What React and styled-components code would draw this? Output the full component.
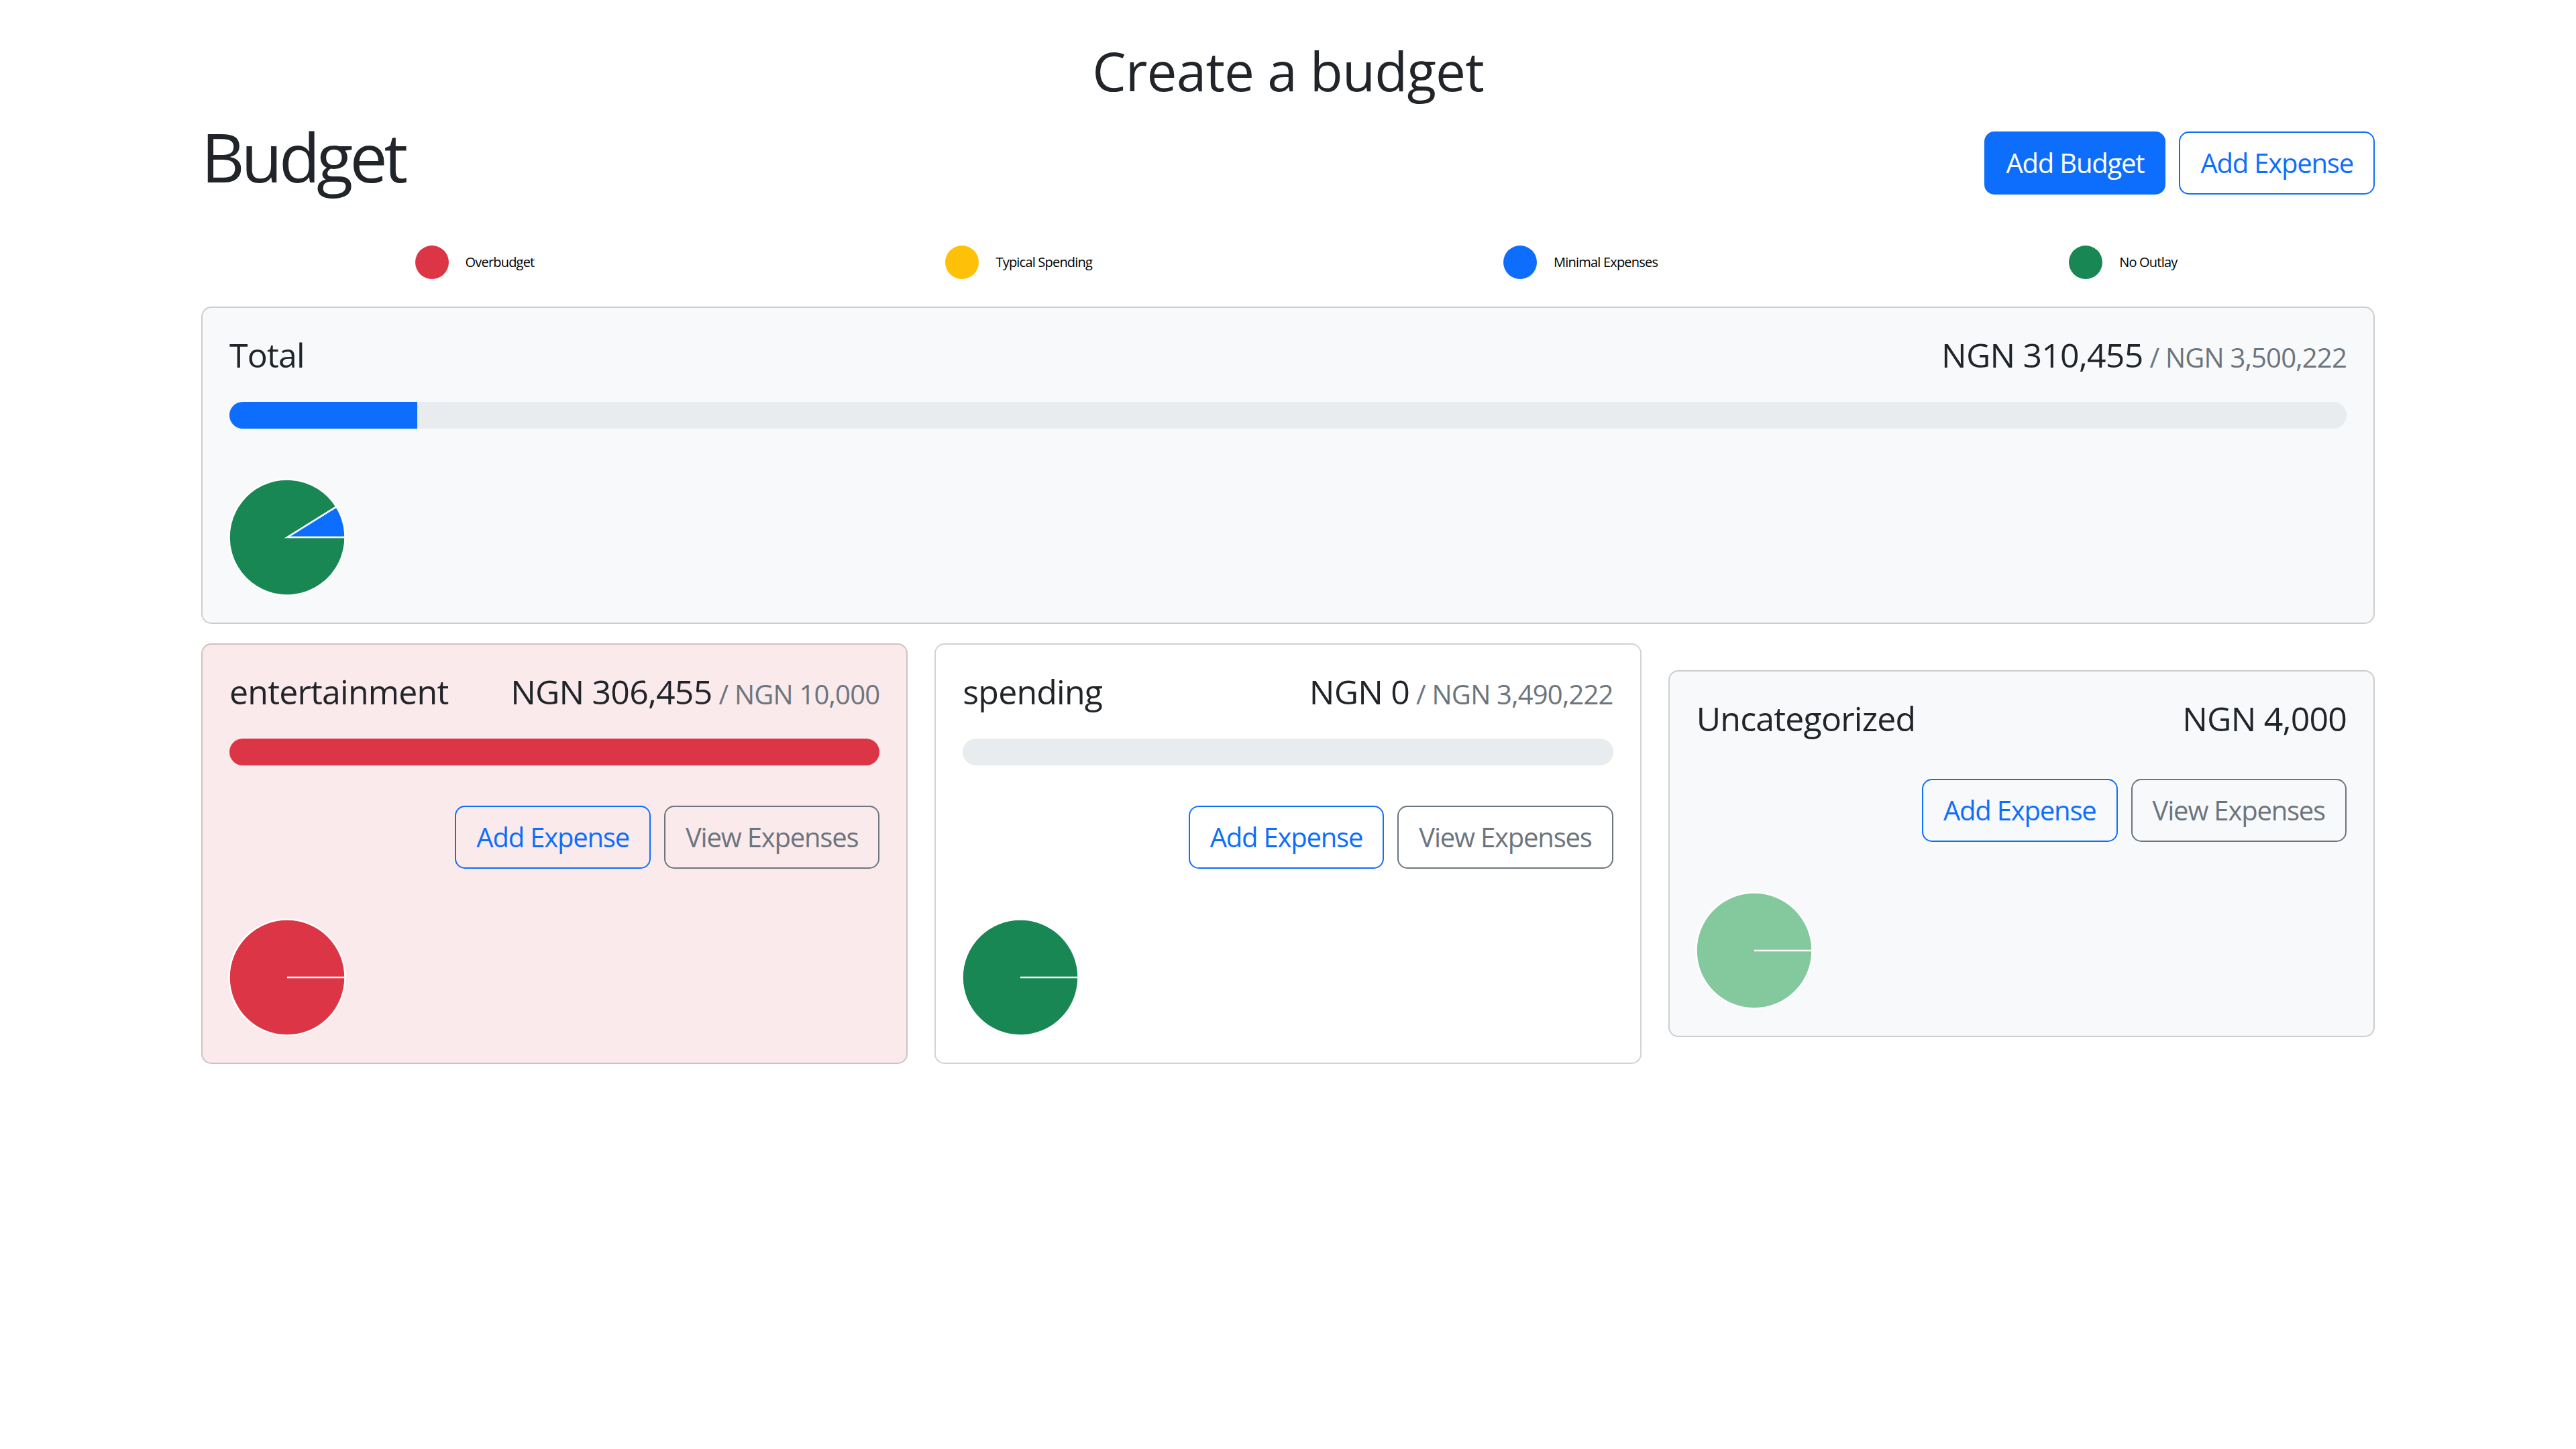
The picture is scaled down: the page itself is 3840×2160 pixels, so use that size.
import React from 'react';
import styled, { createGlobalStyle } from 'styled-components';

const GlobalStyle = createGlobalStyle`
  html { font-size: 40px; }
  * { box-sizing: border-box; }
  body {
    margin: 0;
    background: #fff;
    color: #212529;
    font-family: 'Open Sans', 'Noto Sans', sans-serif;
    line-height: 1.5;
    letter-spacing: -0.02em;
  }
`;

const Page = styled.div`
  padding-top: 57px;
`;

const PageTitle = styled.h2`
  margin: 0 0 0.5rem;
  text-align: center;
  font-size: 2rem;
  font-weight: 500;
  line-height: 1.2;
`;

const Container = styled.div`
  max-width: 82.5rem;
  margin: 0 auto;
  padding: 0 0.75rem;
`;

const Header = styled.div`
  display: flex;
  align-items: center;
  gap: 0.5rem;
  margin-bottom: 53px;
`;

const Heading = styled.h1`
  margin: 0 auto 0.5rem 0;
  font-size: 2.5rem;
  font-weight: 500;
  line-height: 1.2;
  letter-spacing: -0.05em;
`;

const Button = styled.button`
  font-family: inherit;
  letter-spacing: -0.03em;
  font-size: 1rem;
  line-height: 1.5;
  padding: 0.375rem 0.75rem;
  border-radius: 0.375rem;
  border: 2.5px solid ${(p) => p.$color};
  background: ${(p) => (p.$solid ? p.$color : 'transparent')};
  color: ${(p) => (p.$solid ? '#fff' : p.$color)};
  cursor: pointer;
  white-space: nowrap;
`;

const Legend = styled.div`
  display: flex;
  justify-content: space-around;
  align-items: center;
  margin-bottom: 41px;
`;

const LegendItem = styled.div`
  display: flex;
  align-items: center;
  gap: 25px;
  padding-left: 24px;
  font-size: 20px;
  line-height: 1.5;
  color: #000;
`;

const Dot = styled.span`
  width: 50px;
  height: 50px;
  border-radius: 50%;
  background: ${(p) => p.$color};
`;

const Card = styled.div`
  background: ${(p) => p.$bg};
  border: 2.5px solid rgba(0, 0, 0, 0.175);
  border-radius: 0.375rem;
  margin-bottom: ${(p) => p.$mb || 0};
`;

const CardBody = styled.div`
  padding: 1rem;
`;

const CardTitle = styled.h5`
  display: flex;
  justify-content: space-between;
  align-items: baseline;
  margin: 0 0 1rem;
  font-size: 1.25rem;
  font-weight: 400;
  line-height: 1.2;
`;

const Name = styled.div`
  margin-right: 0.5rem;
`;

const Amount = styled.div`
  display: flex;
  align-items: baseline;
`;

const Max = styled.span`
  color: #6c757d;
  font-size: 1rem;
  margin-left: 0.25rem;
`;

const Progress = styled.div`
  display: flex;
  height: 1rem;
  background: #e9ecef;
  border-radius: 50rem;
  overflow: hidden;
`;

const Bar = styled.div`
  background: ${(p) => p.$color};
`;

const Actions = styled.div`
  display: flex;
  justify-content: flex-end;
  gap: 0.5rem;
  margin-top: 1.5rem;
`;

const PieSvg = styled.svg`
  display: block;
  margin-top: 75px;
  margin-left: -1px;
  overflow: visible;
`;

const Grid = styled.div`
  display: grid;
  grid-template-columns: repeat(3, 1fr);
  gap: 1rem;
  align-items: center;
`;

const BLUE = '#0d6efd';
const RED = '#dc3545';
const GREEN = '#198754';
const GRAY = '#6c757d';

function Pie({ slices }) {
  const size = 174;
  const c = size / 2;
  const r = c - 0.5;
  const total = slices.reduce((s, x) => s + x.value, 0);
  const pt = (deg) => {
    const a = (deg * Math.PI) / 180;
    return [c + r * Math.cos(a), c - r * Math.sin(a)];
  };
  let start = 0;
  const shapes = [];
  slices.forEach((s, i) => {
    if (s.value <= 0) return;
    const sweep = (s.value / total) * 360;
    if (sweep >= 359.999) {
      shapes.push(
        <g key={i}>
          <circle cx={c} cy={c} r={r} fill={s.color} stroke="#fff" strokeWidth="2.5" />
          <line x1={c} y1={c} x2={c + r} y2={c} stroke="#fff" strokeWidth="2.5" />
        </g>
      );
    } else {
      const [x0, y0] = pt(start);
      const [x1, y1] = pt(start + sweep);
      const large = sweep > 180 ? 1 : 0;
      shapes.push(
        <path
          key={i}
          d={`M${c},${c} L${x0},${y0} A${r},${r} 0 ${large} 0 ${x1},${y1} Z`}
          fill={s.color}
          stroke="#fff"
          strokeWidth="2.5"
          strokeLinejoin="miter"
        />
      );
    }
    start += sweep;
  });
  return (
    <PieSvg width={size} height={size} viewBox={`0 0 ${size} ${size}`}>
      {shapes}
    </PieSvg>
  );
}

const fmt = (n) => 'NGN ' + n.toLocaleString('en-US');

function BudgetCard({ name, amount, max, bg, barColor, slices, mb, hideButtons }) {
  const pct = max ? Math.min(100, (amount / max) * 100) : 0;
  return (
    <Card $bg={bg} $mb={mb}>
      <CardBody>
        <CardTitle>
          <Name>{name}</Name>
          <Amount>
            {fmt(amount)}
            {max ? <Max>/ {fmt(max)}</Max> : null}
          </Amount>
        </CardTitle>
        {max ? (
          <Progress>
            <Bar $color={barColor} style={{ width: `${pct}%` }} />
          </Progress>
        ) : null}
        {!hideButtons && (
          <Actions>
            <Button $color={BLUE}>Add Expense</Button>
            <Button $color={GRAY}>View Expenses</Button>
          </Actions>
        )}
        <Pie slices={slices} />
      </CardBody>
    </Card>
  );
}

export default function App() {
  return (
    <>
      <GlobalStyle />
      <Page>
        <PageTitle>Create a budget</PageTitle>
        <Container>
          <Header>
            <Heading>Budget</Heading>
            <Button $color={BLUE} $solid>Add Budget</Button>
            <Button $color={BLUE}>Add Expense</Button>
          </Header>
          <Legend>
            <LegendItem><Dot $color={RED} />Overbudget</LegendItem>
            <LegendItem><Dot $color="#ffc107" />Typical Spending</LegendItem>
            <LegendItem><Dot $color={BLUE} />Minimal Expenses</LegendItem>
            <LegendItem><Dot $color={GREEN} />No Outlay</LegendItem>
          </Legend>
          <BudgetCard
            name="Total"
            amount={310455}
            max={3500222}
            bg="#f8f9fa"
            barColor={BLUE}
            mb="29px"
            hideButtons
            slices={[
              { value: 310455, color: BLUE },
              { value: 3500222 - 310455, color: GREEN },
            ]}
          />
          <Grid>
            <BudgetCard
              name="entertainment"
              amount={306455}
              max={10000}
              bg="rgba(220, 53, 69, 0.1)"
              barColor={RED}
              slices={[{ value: 306455, color: RED }]}
            />
            <BudgetCard
              name="spending"
              amount={0}
              max={3490222}
              bg="#fff"
              barColor={BLUE}
              slices={[{ value: 3490222, color: GREEN }]}
            />
            <BudgetCard
              name="Uncategorized"
              amount={4000}
              bg="#f8f9fa"
              slices={[{ value: 4000, color: '#84c99e' }]}
            />
          </Grid>
        </Container>
      </Page>
    </>
  );
}
